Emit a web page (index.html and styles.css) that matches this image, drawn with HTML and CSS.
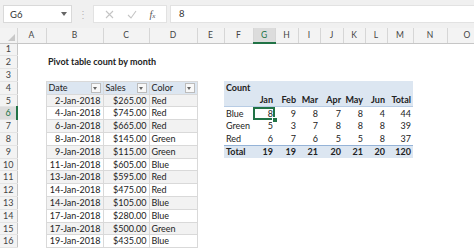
FILE: index.html
```html
<!DOCTYPE html>
<html lang="en">
  <head>
    <meta charset="UTF-8" />
    <title>Pivot table count by month</title>
    <link rel="stylesheet" href="styles.css">
  </head>

  <body>
    <div class="bar">
      <div class="namebox">
        <span>G6</span>
        <svg width="6" height="4" viewBox="0 0 6 4"><polygon points="0,0 6,0 3,4" fill="#666"/></svg>
      </div>
      <div class="grip">&#8942;</div>
      <div class="fxbox">
        <svg width="9" height="9" viewBox="0 0 9 9"><path d="M1 1 L8 8 M8 1 L1 8" stroke="#c4c4c4" stroke-width="1.1" fill="none"/></svg>
        <svg width="10" height="9" viewBox="0 0 10 9"><path d="M1 5 L4 8 L9 1" stroke="#c4c4c4" stroke-width="1.1" fill="none"/></svg>
        <span class="fx">f<small>x</small></span>
      </div>
      <div class="formula">8</div>
    </div>

    <div class="wrap">
      <table class="sheet">
        <colgroup>
          <col style="width:17px"><col style="width:29px"><col style="width:57px"><col style="width:46px">
          <col style="width:48px"><col style="width:27px"><col style="width:29px"><col style="width:22px">
          <col style="width:23px"><col style="width:22px"><col style="width:23px"><col style="width:22px">
          <col style="width:22px"><col style="width:26px"><col style="width:34px"><col style="width:40px">
        </colgroup>
        <thead>
          <tr>
            <th class="corner"><svg width="7" height="7" viewBox="0 0 7 7"><polygon points="7,0 7,7 0,7" fill="#c8c8c8"/></svg></th>
            <th>A</th><th>B</th><th>C</th><th>D</th><th>E</th><th>F</th>
            <th class="sel">G</th><th>H</th><th>I</th><th>J</th><th>K</th><th>L</th>
            <th>M</th><th>N</th><th>O</th>
          </tr>
        </thead>
        <tbody>
          <tr>
            <td class="rh">1</td>
            <td></td><td></td><td></td><td></td><td></td><td></td><td></td><td></td>
            <td></td><td></td><td></td><td></td><td></td><td></td><td></td>
          </tr>
          <tr>
            <td class="rh">2</td>
            <td></td>
            <td colspan="3" class="title">Pivot table count by month</td>
            <td></td><td></td><td></td><td></td><td></td><td></td>
            <td></td><td></td><td></td><td></td><td></td>
          </tr>
          <tr>
            <td class="rh">3</td>
            <td></td><td></td><td></td><td></td><td></td><td></td><td></td><td></td>
            <td></td><td></td><td></td><td></td><td></td><td></td><td></td>
          </tr>
          <tr>
            <td class="rh">4</td>
            <td></td>
            <td class="t th">Date<span class="flt"></span></td>
            <td class="t th">Sales<span class="flt"></span></td>
            <td class="t th">Color<span class="flt"></span></td>
            <td></td>
            <td class="pv b">Count</td>
            <td class="pv"></td><td class="pv"></td><td class="pv"></td><td class="pv"></td>
            <td class="pv"></td><td class="pv"></td><td class="pv"></td>
            <td></td><td></td>
          </tr>
          <tr>
            <td class="rh">5</td>
            <td></td>
            <td class="t band r">2-Jan-2018</td><td class="t band r">$265.00</td><td class="t band">Red</td>
            <td></td>
            <td class="pv pvh"></td>
            <td class="pv pvh b r">Jan</td><td class="pv pvh b r">Feb</td><td class="pv pvh b r">Mar</td>
            <td class="pv pvh b r">Apr</td><td class="pv pvh b r">May</td><td class="pv pvh b r">Jun</td>
            <td class="pv pvh b r">Total</td>
            <td></td><td></td>
          </tr>
          <tr>
            <td class="rh sel">6</td>
            <td></td>
            <td class="t r">4-Jan-2018</td><td class="t r">$745.00</td><td class="t">Red</td>
            <td></td>
            <td>Blue</td>
            <td class="r cur">8<span class="handle"></span></td>
            <td class="r">9</td><td class="r">8</td><td class="r">7</td><td class="r">8</td><td class="r">4</td><td class="r">44</td>
            <td></td><td></td>
          </tr>
          <tr>
            <td class="rh">7</td>
            <td></td>
            <td class="t band r">6-Jan-2018</td><td class="t band r">$665.00</td><td class="t band">Red</td>
            <td></td>
            <td>Green</td>
            <td class="r">5</td><td class="r">3</td><td class="r">7</td><td class="r">8</td><td class="r">8</td><td class="r">8</td><td class="r">39</td>
            <td></td><td></td>
          </tr>
          <tr>
            <td class="rh">8</td>
            <td></td>
            <td class="t r">8-Jan-2018</td><td class="t r">$145.00</td><td class="t">Green</td>
            <td></td>
            <td>Red</td>
            <td class="r">6</td><td class="r">7</td><td class="r">6</td><td class="r">5</td><td class="r">5</td><td class="r">8</td><td class="r">37</td>
            <td></td><td></td>
          </tr>
          <tr>
            <td class="rh">9</td>
            <td></td>
            <td class="t band r">9-Jan-2018</td><td class="t band r">$115.00</td><td class="t band">Green</td>
            <td></td>
            <td class="pvt">Total</td>
            <td class="pvt r">19</td><td class="pvt r">19</td><td class="pvt r">21</td><td class="pvt r">20</td>
            <td class="pvt r">21</td><td class="pvt r">20</td><td class="pvt r">120</td>
            <td></td><td></td>
          </tr>
          <tr>
            <td class="rh">10</td>
            <td></td>
            <td class="t r">11-Jan-2018</td><td class="t r">$605.00</td><td class="t">Blue</td>
            <td></td><td></td><td></td><td></td><td></td><td></td><td></td><td></td><td></td><td></td><td></td>
          </tr>
          <tr>
            <td class="rh">11</td>
            <td></td>
            <td class="t band r">13-Jan-2018</td><td class="t band r">$595.00</td><td class="t band">Red</td>
            <td></td><td></td><td></td><td></td><td></td><td></td><td></td><td></td><td></td><td></td><td></td>
          </tr>
          <tr>
            <td class="rh">12</td>
            <td></td>
            <td class="t r">14-Jan-2018</td><td class="t r">$475.00</td><td class="t">Red</td>
            <td></td><td></td><td></td><td></td><td></td><td></td><td></td><td></td><td></td><td></td><td></td>
          </tr>
          <tr>
            <td class="rh">13</td>
            <td></td>
            <td class="t band r">14-Jan-2018</td><td class="t band r">$105.00</td><td class="t band">Blue</td>
            <td></td><td></td><td></td><td></td><td></td><td></td><td></td><td></td><td></td><td></td><td></td>
          </tr>
          <tr>
            <td class="rh">14</td>
            <td></td>
            <td class="t r">17-Jan-2018</td><td class="t r">$280.00</td><td class="t">Blue</td>
            <td></td><td></td><td></td><td></td><td></td><td></td><td></td><td></td><td></td><td></td><td></td>
          </tr>
          <tr>
            <td class="rh">15</td>
            <td></td>
            <td class="t band r">17-Jan-2018</td><td class="t band r">$500.00</td><td class="t band">Green</td>
            <td></td><td></td><td></td><td></td><td></td><td></td><td></td><td></td><td></td><td></td><td></td>
          </tr>
          <tr>
            <td class="rh">16</td>
            <td></td>
            <td class="t r">19-Jan-2018</td><td class="t r">$435.00</td><td class="t">Blue</td>
            <td></td><td></td><td></td><td></td><td></td><td></td><td></td><td></td><td></td><td></td><td></td>
          </tr>
        </tbody>
      </table>
    </div>
  </body>
</html>
```

FILE: styles.css
```css
body {
  margin: 0;
  font-family: Lato, "Liberation Sans", sans-serif;
  background: #fff;
  color: #222;
  overflow: hidden;
}
.bar {
  height: 28px;
  background: #f0f0f0;
  display: flex;
  align-items: center;
  padding-left: 3px;
  box-sizing: border-box;
}
.namebox {
  width: 69px;
  height: 18px;
  background: #fff;
  border: 1px solid #d9d9d9;
  box-sizing: border-box;
  display: flex;
  align-items: center;
  justify-content: space-between;
  padding: 0 4px 0 6px;
  font-size: 9.5px;
  color: #333;
}
.grip {
  width: 21px;
  text-align: center;
  color: #b5b5b5;
  font-size: 10px;
}
.fxbox {
  width: 74px;
  height: 18px;
  background: #fff;
  border: 1px solid #e2e2e2;
  box-sizing: border-box;
  display: flex;
  align-items: center;
  justify-content: space-around;
  padding: 0 4px;
}
.fx {
  font-family: "Liberation Serif", serif;
  font-style: italic;
  font-size: 10px;
  color: #555;
}
.fx small {
  font-size: 7px;
}
.formula {
  flex: 1;
  height: 18px;
  margin-left: 3px;
  background: #fff;
  border: 1px solid #e2e2e2;
  border-right: none;
  box-sizing: border-box;
  padding-left: 8px;
  font-size: 9.5px;
  line-height: 16px;
  color: #333;
}
.wrap {
  width: 474px;
  overflow: hidden;
}
.sheet {
  border-collapse: collapse;
  table-layout: fixed;
  width: 487px;
  font-size: 9px;
}
.sheet thead tr {
  height: 15px;
}
.sheet th {
  padding: 0;
  background: #f3f3f3;
  border-right: 1px solid #d6d6d6;
  border-bottom: 1px solid #c6c6c6;
  font-weight: normal;
  color: #444;
  font-size: 8.5px;
  line-height: 12px;
}
.sheet th.corner {
  text-align: right;
  vertical-align: bottom;
  line-height: 0;
  padding: 0 2px 2px 0;
}
.sheet th.sel {
  background: #dcdcdc;
  color: #217346;
  border-bottom: 2px solid #217346;
}
.sheet tbody tr {
  height: 12.8px;
}
.sheet td {
  padding: 0 2px;
  line-height: 10px;
  white-space: nowrap;
  overflow: hidden;
}
.sheet td.rh {
  background: #f3f3f3;
  border-right: 1px solid #c6c6c6;
  border-bottom: 1px solid #e4e4e4;
  text-align: center;
  color: #444;
  padding: 0;
}
.sheet td.rh.sel {
  background: #dcdcdc;
  color: #217346;
  border-right: 2px solid #217346;
}
.title {
  font-weight: bold;
  padding-left: 2px;
}
.r {
  text-align: right;
}
.b {
  font-weight: bold;
}
.t {
  border: 1px solid #d9d9d9;
}
.th {
  background: #dce6f1;
}
.band {
  background: #f2f2f2;
}
.flt {
  float: right;
  width: 8px;
  height: 8px;
  border: 1px solid #bcbcbc;
  background: #f8f8f8;
  position: relative;
}
.flt::after {
  content: "";
  position: absolute;
  left: 1.5px;
  top: 3px;
  border-left: 2.5px solid transparent;
  border-right: 2.5px solid transparent;
  border-top: 3px solid #666;
}
.pv {
  background: #dce6f1;
}
.pvh {
  border-bottom: 1px solid #b8cce4;
}
.pvt {
  background: #dce6f1;
  border-top: 1px solid #95b3d7;
  font-weight: bold;
}
.cur {
  position: relative;
  outline: 2px solid #217346;
  outline-offset: -2px;
  overflow: visible !important;
}
.handle {
  position: absolute;
  right: -3px;
  bottom: -3px;
  width: 4px;
  height: 4px;
  background: #217346;
  border: 1px solid #fff;
}
```
